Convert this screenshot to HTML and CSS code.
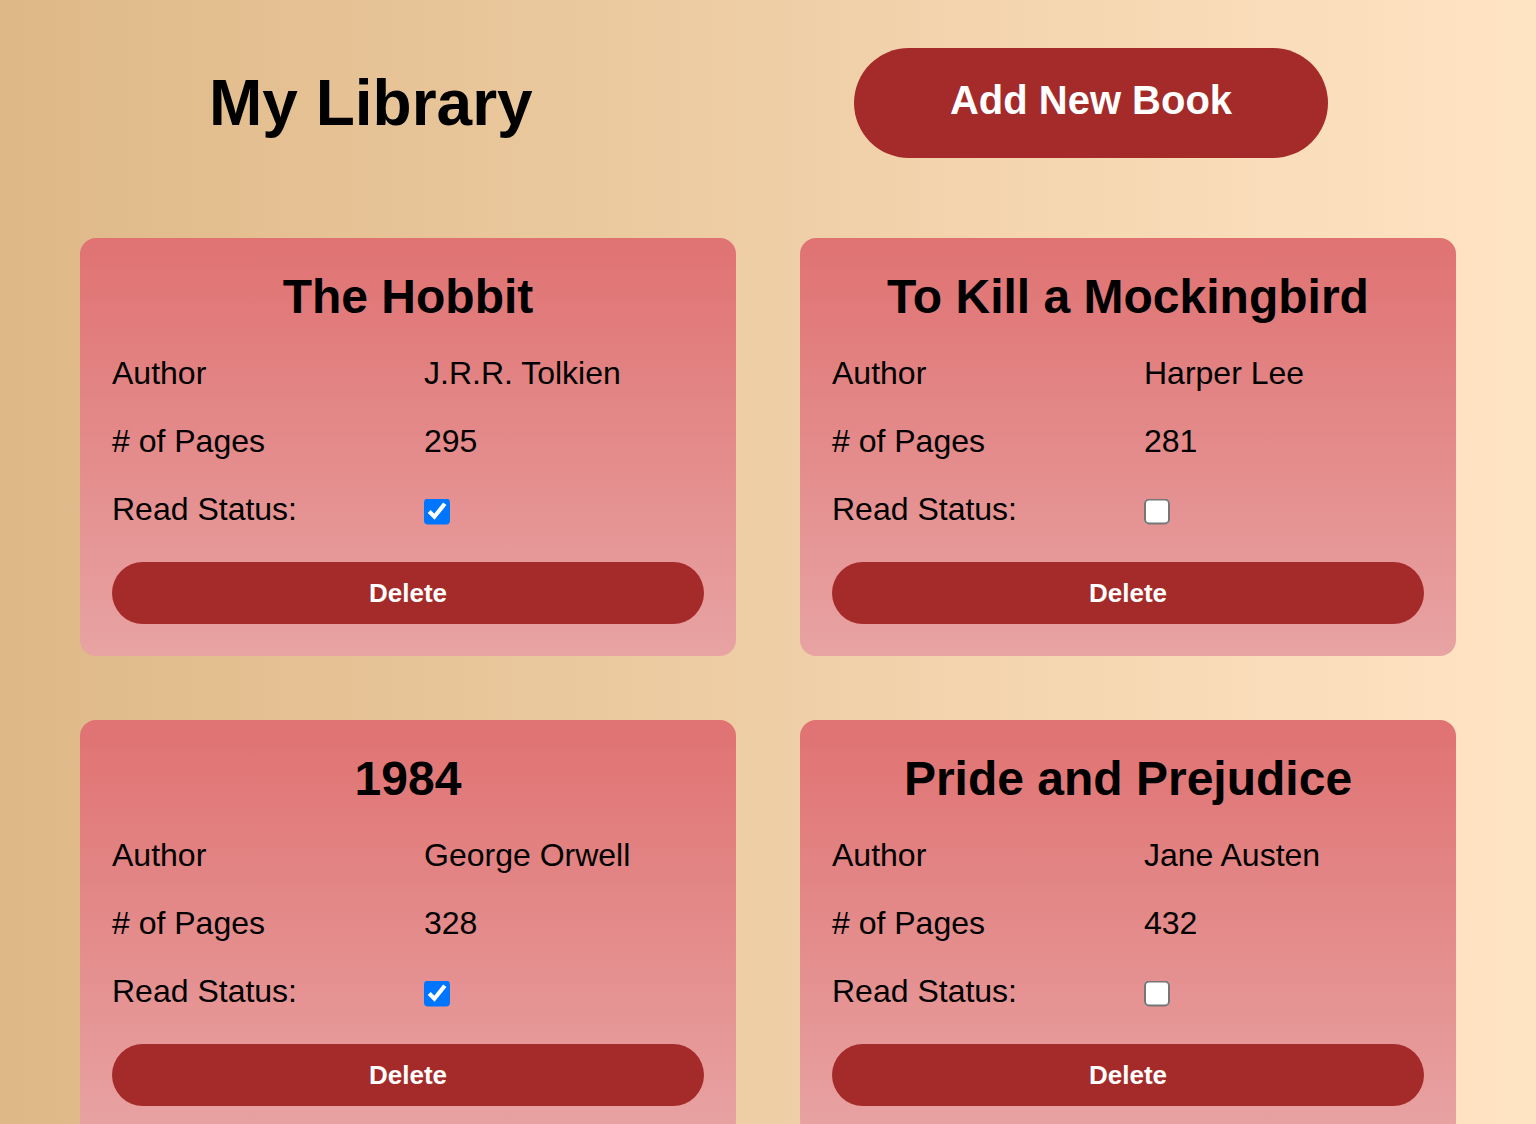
FILE: index.html
```html
<!DOCTYPE html>
<html lang="en">
<head>
<meta charset="utf-8">
<title>My Library</title>
<link rel="stylesheet" href="styles.css">
</head>
<body>
<header class="header">
  <h1 class="page-title">My Library</h1>
  <button class="add-btn" type="button">Add New Book</button>
</header>
<main class="library">
  <div class="card">
    <h2 class="card-title">The Hobbit</h2>
    <div class="info">
      <span>Author</span><span>J.R.R. Tolkien</span>
      <span># of Pages</span><span>295</span>
      <span>Read Status:</span><span class="check-cell"><input class="read-check" type="checkbox" checked></span>
    </div>
    <button class="delete-btn" type="button">Delete</button>
  </div>
  <div class="card">
    <h2 class="card-title">To Kill a Mockingbird</h2>
    <div class="info">
      <span>Author</span><span>Harper Lee</span>
      <span># of Pages</span><span>281</span>
      <span>Read Status:</span><span class="check-cell"><input class="read-check" type="checkbox"></span>
    </div>
    <button class="delete-btn" type="button">Delete</button>
  </div>
  <div class="card">
    <h2 class="card-title">1984</h2>
    <div class="info">
      <span>Author</span><span>George Orwell</span>
      <span># of Pages</span><span>328</span>
      <span>Read Status:</span><span class="check-cell"><input class="read-check" type="checkbox" checked></span>
    </div>
    <button class="delete-btn" type="button">Delete</button>
  </div>
  <div class="card">
    <h2 class="card-title">Pride and Prejudice</h2>
    <div class="info">
      <span>Author</span><span>Jane Austen</span>
      <span># of Pages</span><span>432</span>
      <span>Read Status:</span><span class="check-cell"><input class="read-check" type="checkbox"></span>
    </div>
    <button class="delete-btn" type="button">Delete</button>
  </div>
</main>
</body>
</html>
```
FILE: styles.css
```css
html, body {
  margin: 0;
  padding: 0;
}
body {
  font-family: "Liberation Sans", Arial, sans-serif;
  background: linear-gradient(to right, #deb887, #ffe4c4);
  min-height: 100vh;
  color: #000;
}
.header {
  display: flex;
  justify-content: space-between;
  align-items: center;
  padding: 48px 208px 0 209px;
}
.page-title {
  margin: 0;
  font-size: 64px;
  font-weight: 700;
}
.add-btn {
  font-family: inherit;
  font-size: 40px;
  font-weight: 700;
  line-height: 46px;
  color: #fff;
  background: #a52a2a;
  border: none;
  border-radius: 56px;
  padding: 29px 0 35px;
  width: 474px;
}
.library {
  display: grid;
  grid-template-columns: 1fr 1fr;
  gap: 64px;
  padding: 80px 80px 0;
}
.card {
  background: linear-gradient(to bottom, #e07272, #e8a3a3);
  border-radius: 16px;
  padding: 31px 32px 32px;
  display: flex;
  flex-direction: column;
  gap: 31px;
}
.card-title {
  margin: 0;
  text-align: center;
  font-size: 48px;
  font-weight: 700;
}
.info {
  display: grid;
  grid-template-columns: 1fr 1fr;
  column-gap: 32px;
  row-gap: 31px;
  font-size: 32px;
  align-items: center;
}
.check-cell {
  display: flex;
  align-items: center;
  height: 37px;
}
.read-check {
  width: 13px;
  height: 13px;
  margin: 4px 0 0;
  transform: scale(2);
  transform-origin: left center;
}
.delete-btn {
  font-family: inherit;
  font-size: 26px;
  font-weight: 700;
  color: #fff;
  background: #a52a2a;
  border: none;
  border-radius: 31px;
  height: 62px;
  margin-top: 3px;
}
```
